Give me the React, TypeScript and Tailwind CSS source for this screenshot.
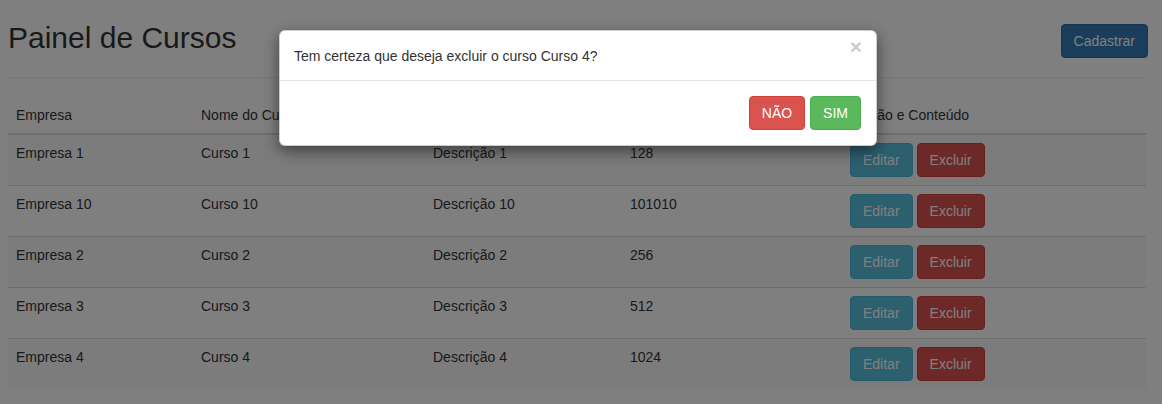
import React from "react";

const cursos = [
  { empresa: "Empresa 1", nome: "Curso 1", descricao: "Descrição 1", carga: "128" },
  { empresa: "Empresa 10", nome: "Curso 10", descricao: "Descrição 10", carga: "101010" },
  { empresa: "Empresa 2", nome: "Curso 2", descricao: "Descrição 2", carga: "256" },
  { empresa: "Empresa 3", nome: "Curso 3", descricao: "Descrição 3", carga: "512" },
  { empresa: "Empresa 4", nome: "Curso 4", descricao: "Descrição 4", carga: "1024" },
];

function Btn({ children, className }: { children: React.ReactNode; className: string }) {
  return (
    <button
      className={`rounded-[4px] border px-3 py-[6px] text-[14px] leading-[20px] text-white ${className}`}
    >
      {children}
    </button>
  );
}

export default function App() {
  return (
    <div className="relative h-[404px] w-full overflow-hidden bg-white font-['Liberation_Sans',Arial,sans-serif] text-[14px] leading-[20px] text-[#333]">
      <div className="px-2">
        <div className="flex items-start justify-between pt-[21px]">
          <h1 className="text-[30px] leading-[33px] font-normal">Painel de Cursos</h1>
          <Btn className="mr-[6px] mt-[3px] border-[#2e6da4] bg-[#337ab7]">Cadastrar</Btn>
        </div>
        <div className="mt-[19px] w-[1138px] border-t border-[#eee]" />

        <table className="mt-[19px] w-[1138px] table-fixed border-collapse">
          <colgroup>
            <col className="w-[185px]" />
            <col className="w-[232px]" />
            <col className="w-[197px]" />
            <col className="w-[220px]" />
            <col className="w-[304px]" />
          </colgroup>
          <thead>
            <tr className="border-b-2 border-[#ddd]">
              <th className="p-2 text-left font-normal">Empresa</th>
              <th className="p-2 text-left font-normal">Nome do Curso</th>
              <th className="p-2 text-left font-normal">Descrição</th>
              <th className="p-2 text-left font-normal">Carga Horária</th>
              <th className="p-2 text-left font-normal">Edição e Conteúdo</th>
            </tr>
          </thead>
          <tbody>
            {cursos.map((c, i) => (
              <tr
                key={c.empresa}
                className={`border-t border-[#ddd] align-top ${i % 2 === 0 ? "bg-[#f9f9f9]" : ""}`}
              >
                <td className="p-2">{c.empresa}</td>
                <td className="p-2">{c.nome}</td>
                <td className="p-2">{c.descricao}</td>
                <td className="p-2">{c.carga}</td>
                <td className="p-2">
                  <div className="flex gap-1">
                    <Btn className="border-[#46b8da] bg-[#5bc0de]">Editar</Btn>
                    <Btn className="border-[#d43f3a] bg-[#d9534f]">Excluir</Btn>
                  </div>
                </td>
              </tr>
            ))}
          </tbody>
        </table>
      </div>

      {/* backdrop */}
      <div className="absolute inset-0 bg-black/50" />

      {/* modal */}
      <div className="absolute left-[279px] top-[30px] w-[598px] rounded-[6px] border border-black/20 bg-white shadow-[0_5px_15px_rgba(0,0,0,0.5)]">
        <div className="relative border-b border-[#e5e5e5] p-[15px] pb-[14px] pl-[14px]">
          <p>Tem certeza que deseja excluir o curso Curso 4?</p>
          <span className="absolute right-[14px] top-[5px] text-[21px] leading-none font-bold text-black opacity-20">
            ×
          </span>
        </div>
        <div className="flex justify-end gap-[5px] p-[15px]">
          <Btn className="border-[#d43f3a] bg-[#d9534f]">NÃO</Btn>
          <Btn className="border-[#4cae4c] bg-[#5cb85c]">SIM</Btn>
        </div>
      </div>
    </div>
  );
}
